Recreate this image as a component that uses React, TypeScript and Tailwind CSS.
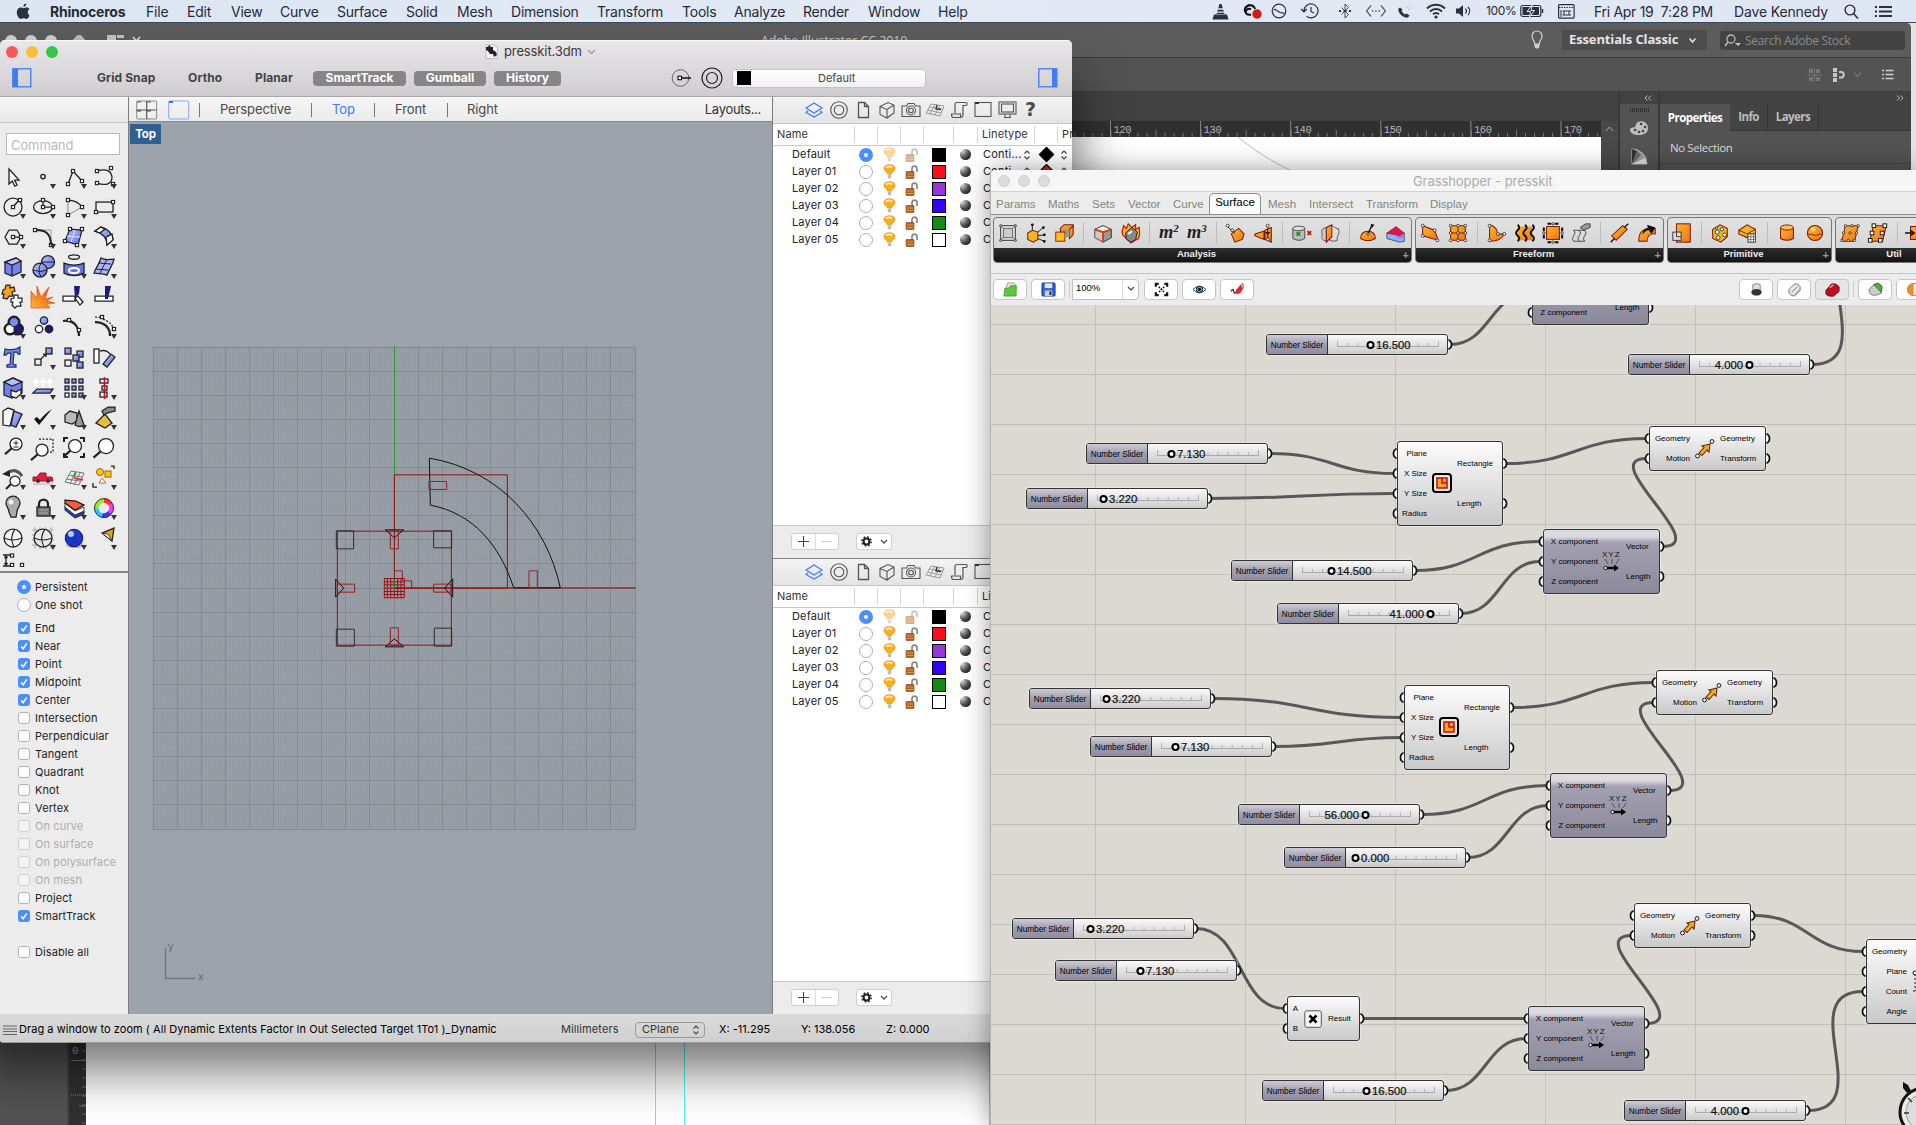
import React from "react";

/* ---------- helpers ---------- */
function Svg({ w, h = w, vb, children, cls = "" }: { w: number; h?: number; vb?: string; children: React.ReactNode; cls?: string }) {
  return (
    <svg width={w} height={h} viewBox={vb ?? `0 0 ${w} ${h}`} fill="none" className={`shrink-0 ${cls}`}>
      {children}
    </svg>
  );
}

/* gradients shared by the tool icons */
function SharedDefs() {
  return (
    <svg width="0" height="0" className="absolute">
      <defs>
        <linearGradient id="tool-orange" x1="0" y1="0" x2="1" y2="1"><stop offset="0" stopColor="#fdb827" /><stop offset="1" stopColor="#f2711a" /></linearGradient>
        <linearGradient id="tool-blue" x1="0" y1="0" x2="1" y2="1"><stop offset="0" stopColor="#b9c5ff" /><stop offset="1" stopColor="#5f70ea" /></linearGradient>
        <linearGradient id="tool-fire" x1="0" y1="1" x2="1" y2="0"><stop offset="0" stopColor="#ffb432" /><stop offset="1" stopColor="#e8420c" /></linearGradient>
      </defs>
    </svg>
  );
}

/* ---------- macOS menu bar ---------- */
const MENUS: [string, string][] = [
  ["File", "w-[41px]"], ["Edit", "w-[44px]"], ["View", "w-[49px]"], ["Curve", "w-[57px]"], ["Surface", "w-[69px]"],
  ["Solid", "w-[51px]"], ["Mesh", "w-[54px]"], ["Dimension", "w-[86px]"], ["Transform", "w-[85px]"], ["Tools", "w-[52px]"],
  ["Analyze", "w-[69px]"], ["Render", "w-[65px]"], ["Window", "w-[70px]"], ["Help", "w-[60px]"],
];

function MenuBar() {
  const c = "#2b313c";
  return (
    <div className="absolute top-0 left-0 flex h-[23px] w-[1916px] items-center border-b border-[#3c4858] bg-linear-to-r from-[#dbe6f2] via-[#e3eaf6] to-[#dfe6f3] text-[14px] font-normal tracking-[-0.22px] whitespace-pre text-[#252b35]">
      <div className="flex w-[50px] pl-[16px]">
        <Svg w={15} h={17}>
          <path d="M10.3 0.6c.2 1.7-1.3 3.300-2.900 3.200-.2-1.600 1.300-3.100 2.900-3.200zM13.500 12.400c-.7 1.600-1.700 3.500-3.200 3.500-1 0-1.500-.6-2.700-.6s-1.700.6-2.600.6C2.800 15.900.8 12.300.8 9.200c0-2.900 1.900-4.700 3.900-4.700 1.200 0 2 .7 3 .7s1.800-.8 3.200-.7c1.100 0 2 .6 2.600 1.500-2.600 1.600-2 5.100 0 6.400z" fill={c} />
        </Svg>
      </div>
      <div className="w-[96px] text-[14px] font-bold tracking-[-0.2px]">Rhinoceros</div>
      {MENUS.map(([m, w]) => <div key={m} className={w}>{m}</div>)}
      <div className="ml-[214px] flex w-[274px] items-center">
        <Svg w={17} h={17}><path d="M7.500 1h2l3 10H4.500zM2 11.500h13l1.500 5H.5z" fill={c} /><path d="M6 6h5M5 9.200h7" stroke="#dfe7f3" strokeWidth="1.300" /></Svg>
        <Svg w={22} h={16} cls="ml-[12px]"><path d="M10 11.500A4.800 4.800 0 1 1 12.500 4M5 9a3 3 0 0 1 5-2.500M4.500 5.500C6 1 13 1 14 6" stroke="#111" strokeWidth="1.900" /><circle cx="16" cy="11" r="4.700" fill="#d31d0c" /></Svg>
        <Svg w={16} h={16} cls="ml-[8px]"><circle cx="8" cy="8" r="6.800" stroke={c} strokeWidth="1.200" /><path d="M2.500 6.500c3.500-1.200 4 4.500 11 3.500" stroke={c} strokeWidth="1.200" /></Svg>
        <Svg w={20} h={17} cls="ml-[13px]"><path d="M4 8a7 7 0 1 1 2.500 5.200M1 6l3 3 2.800-3M11 4v4.500l3 1.500" stroke={c} strokeWidth="1.200" /></Svg>
        <Svg w={14} h={16} cls="ml-[18px]"><path d="M3.500 4.500l7 7L7 15V1l3.500 3.500-7 7" stroke="#444b57" strokeWidth="1" /><path d="M1 8h2M5.500 8h3M11 8h2" stroke={c} strokeWidth="2" /></Svg>
        <Svg w={22} h={14} cls="ml-[13px]"><path d="M6 1.500L1.500 7 6 12.500M16 1.500L20.500 7 16 12.500" stroke="#596070" strokeWidth="1.200" /><path d="M7 7h1.500M10.200 7h1.500M13.400 7h1.500" stroke="#596070" strokeWidth="1.500" /></Svg>
        <Svg w={16} h={16} cls="ml-[10px]"><path d="M3 4.500l-1.500 1c-1 4.500 5 10 9.500 9l1.500-2-3-2-2 1-3-3.500 1-1.500z" fill={c} /><path d="M9 5l4-4M11 7l4-4" stroke="#a5adba" strokeDasharray="1 1" /></Svg>
        <Svg w={20} h={16} cls="ml-[13px]"><path d="M1 5.500c5-5 13-5 18 0M4 8.500c3.500-3.400 8.500-3.400 12 0M7 11.300c2-1.700 4-1.700 6 0" stroke={c} strokeWidth="1.900" /><circle cx="10" cy="14" r="1.600" fill={c} /></Svg>
        <Svg w={18} h={14} cls="ml-[10px]"><path d="M0 4.500h3l4-3.500v12L3 9.500H0z" fill={c} /><path d="M9.500 4.500c1.200 1.500 1.200 3.500 0 5M12 2.800c2.200 2.500 2.200 6 0 8.400" stroke={c} strokeWidth="1.200" /></Svg>
      </div>
      <div className="w-[34px] text-[12px] tracking-[-0.35px]">100%</div>
      <div className="w-[38px]"><Svg w={24} h={14}><rect x=".8" y="1.500" width="20" height="11" rx="2" stroke={c} strokeWidth="1.200" /><rect x="2.500" y="3" width="16.500" height="8" fill={c} /><path d="M12 1L7 7.500h3.500L9.500 13l5-6.500H11z" fill={c} stroke="#e3eaf6" strokeWidth="1" /><path d="M22.500 5v4" stroke={c} strokeWidth="1.500" /></Svg></div>
      <div className="w-[36px]"><Svg w={17} h={15}><rect x=".6" y=".6" width="15.500" height="13.500" rx="1" stroke={c} strokeWidth="1.200" /><path d="M1 3.500h15" stroke={c} strokeWidth="1" strokeDasharray="1.500 1" /><path d="M6 7h5v4H6zM4.500 7h1.500M11 7h2M4.500 11H6M11 11h2M3 6v7" stroke={c} strokeWidth="1" /></Svg></div>
      <div className="w-[140px] tracking-[-0.3px]">Fri Apr 19  7:28 PM</div>
      <div className="w-[110px] tracking-[-0.15px]">Dave Kennedy</div>
      <Svg w={15} h={15}><circle cx="6" cy="6" r="4.900" stroke={c} strokeWidth="1.400" /><path d="M9.500 9.500l4.500 5" stroke={c} strokeWidth="1.600" /></Svg>
      <Svg w={19} h={13} cls="ml-[15px]"><path d="M5 2h13M5 6.500h13M5 11h13" stroke={c} strokeWidth="1.900" /><path d="M1 2h2M1 6.500h2M1 11h2" stroke={c} strokeWidth="1.900" /></Svg>
    </div>
  );
}

/* ---------- Illustrator, behind the other windows ---------- */
function Ruler() {
  const labels = [120, 130, 140, 150, 160, 170];
  return (
    <svg width="1601" height="16" className="shrink-0 bg-[#303030]">
      {Array.from({ length: 60 }, (_, i) => {
        const x = 1075 + i * 9.01;
        return x < 1598 ? <path key={i} d={`M${x} ${(i + 1) % 5 === 0 ? 9 : 12}V16`} stroke="#777" /> : null;
      })}
      {labels.map((l, i) => (
        <g key={l}>
          <path d={`M${1110.5 + i * 90.1} 0V16`} stroke="#888" />
          <text x={1113.5 + i * 90.1} y="11.500" fontSize="10.500" fill="#b4b4b4" fontFamily="Liberation Mono" letterSpacing="-0.4">{l}</text>
        </g>
      ))}
    </svg>
  );
}

function Illustrator() {
  return (
    <div className="absolute top-[23px] left-0 flex h-[1102px] w-[1911px] flex-col overflow-hidden rounded-tr-[5px] bg-[#535353] font-['Open_Sans','Noto_Sans',sans-serif] whitespace-nowrap">
      <div className="relative flex h-[35px] shrink-0 items-center border-b border-[#3c3c3c] bg-[#5c5c5c]">
        <div className="absolute top-[9px] left-[761px] text-[12.500px] tracking-[-0.1px] text-[#c4c4c4]">Adobe Illustrator CC 2019</div>
        <div className="flex w-[1529px] items-center self-start pt-[12px]">
          <Svg w={150} h={12}><circle cx="11" cy="6" r="6" fill="#cfcfcf" /><circle cx="31" cy="6" r="6" fill="#cfcfcf" /><circle cx="51" cy="6" r="6" fill="#cfcfcf" /><path d="M70 8l9-10 9 10z" fill="#b9b9b9" /><path d="M107-2h9v12h-9zM117-2h7v5h-7z" fill="#c4c4c4" /><path d="M133 2l3.500 4 3.500-4" stroke="#ddd" strokeWidth="1.500" /></Svg>
        </div>
        <Svg w={16} h={20}><path d="M5.500 12C4 10 3 9 3 6a5 5 0 0 1 10 0c0 3-1 4-2.500 6v2h-5z" stroke="#d0d0d0" strokeWidth="1.200" /><path d="M5.500 14h5v3l-1.500 1.500H7L5.500 17z" fill="#d0d0d0" /></Svg>
        <div className="ml-[17px] flex h-[20px] w-[145px] items-center rounded-[1px] bg-[#4d4d4d] pl-[7px] text-[13px] font-bold tracking-[-0.12px] text-[#e4e4e4]">
          <span className="w-[119px]">Essentials Classic</span>
          <Svg w={9} h={7}><path d="M1.500 1.500l3 3.500 3-3.500" stroke="#ddd" strokeWidth="1.600" /></Svg>
        </div>
        <div className="ml-[13px] flex h-[19px] w-[185px] items-center rounded-[3px] bg-[#434343] pt-px pl-[4px] text-[12px] tracking-[-0.3px] text-[#8b8b8b]">
          <Svg w={18} h={14} cls="mr-[3px]"><circle cx="7" cy="5" r="4" stroke="#bbb" strokeWidth="1.300" /><path d="M4 8L1 12" stroke="#bbb" strokeWidth="1.500" /><path d="M11 9h6l-3 3z" fill="#ccc" /></Svg>
          Search Adobe Stock
        </div>
      </div>
      <div className="flex h-[34px] shrink-0 items-center border-b border-[#3a3a3a] bg-[#535353] pl-[1807px]">
        <Svg w={15} h={14}><path d="M2 1h4v4H2zM9 1h4v4H9zM2 9h4v4H2zM9 9h4v4H9z" fill="#777" /><path d="M7.500 0v14M0 7h15" stroke="#777" /></Svg>
        <Svg w={16} h={14} cls="ml-[10px]"><path d="M1 0h4v4H1zM1 5h4v4H1zM1 10h4v4H1z" fill="#c8c8c8" /><path d="M7 4h3a3 3 0 0 1 0 5.500H7" stroke="#c8c8c8" strokeWidth="2" /></Svg>
        <Svg w={9} h={7} cls="ml-[5px]"><path d="M1 1.500l3.500 4 3.500-4" stroke="#777" strokeWidth="1.200" /></Svg>
        <Svg w={12} h={11} cls="ml-[20px]"><path d="M3.500 1.500h8M3.500 5.500h8M3.500 9.500h8M0 1.500h2M0 5.500h2M0 9.500h2" stroke="#d0d0d0" strokeWidth="1.500" /></Svg>
      </div>
      <div className="flex min-h-0 flex-1">
        <div className="flex w-[1618px] flex-col">
          <div className="h-[29px] shrink-0 bg-[#424242]" />
          <div className="flex h-[16px] shrink-0"><Ruler /><div className="flex flex-1 justify-center bg-[#494949] pt-[5px]"><Svg w={9} h={6}><path d="M1 5l3.500-4L8 5" stroke="#aaa" /></Svg></div></div>
          <div className="flex min-h-0 flex-1">
            <div className="w-[67px] shrink-0 bg-[#535353]" />
            <div className="flex w-[19px] shrink-0 items-end border-l-2 border-[#444] bg-[#303030]">
              <svg width="17" height="90">
                {Array.from({ length: 10 }, (_, i) => <path key={i} d={`M13 ${16 + i * 9}h4`} stroke="#666" />)}
                <path d="M2 25.500h15" stroke="#777" /><path d="M2 60h15" stroke="#888" strokeDasharray="1 1" />
                <text x="3" y="19" fontSize="10.500" fill="#aaa" fontFamily="Liberation Mono">0</text>
                <path d="M10 71h7" stroke="#777" />
              </svg>
            </div>
            <svg width="1515" height="988" className="shrink-0 bg-white">
              <path d="M569.500 0v988M598.500 0v988M903.500 0v988" stroke="#4ff3f3" />
              <path d="M1152 0c16 13 34 25 54 34" stroke="#bbb" fill="none" />
            </svg>
            <div className="flex-1 bg-[#494949]" />
          </div>
        </div>
        <div className="flex w-[42px] flex-col border-x-2 border-[#383838] bg-[#535353]">
          <div className="flex h-[12px] items-center justify-end bg-[#424242] pr-[6px]"><Svg w={8} h={6}><path d="M3.500.5L1 3l2.500 2.500M7 .5L4.500 3 7 5.500" stroke="#bbb" /></Svg></div>
          <div className="mt-[4px] flex justify-center"><Svg w={19} h={4}><path d="M0 2h19" stroke="#2f2f2f" strokeWidth="4" strokeDasharray="1 1" /></Svg></div>
          <Svg w={20} h={16} cls="mt-[8px] ml-[9px]"><path d="M19 8c0 5-4 7-9 7s-9-2-9-5 4-2 5-3 0-3 3-5c4-2 10 0 10 6z" fill="#bdbdbd" /><path d="M6 10h.1M10 12h.1M14 11h.1M16 7h.1M12 4h.1" stroke="#444" strokeWidth="2.600" strokeLinecap="round" /></Svg>
          <Svg w={18} h={17} cls="mt-[12px] ml-[11px]"><path d="M1 1v15h15A15 15 0 0 0 1 1z" fill="#999" stroke="#bbb" /><path d="M1 16L1 1l5 2z" fill="#333" /><path d="M1 16L6 3l4 4z" fill="#666" /><path d="M1 16l13-6 2 6z" fill="#ddd" /></Svg>
        </div>
        <div className="flex flex-1 flex-col bg-[#535353]">
          <div className="flex h-[12px] shrink-0 items-center justify-end bg-[#424242] pr-[7px]"><Svg w={8} h={6}><path d="M1 .5L3.500 3 1 5.500M4.500.5L7 3 4.500 5.500" stroke="#bbb" /></Svg></div>
          <div className="flex h-[27px] shrink-0 bg-[#434343] text-[11.500px] font-bold tracking-[-0.55px] text-[#bdbdbd]">
            <div className="flex w-[70px] items-center justify-center bg-[#535353] text-white">Properties</div>
            <div className="flex w-[38px] items-center justify-center border-r border-b border-[#333]">Info</div>
            <div className="flex w-[51px] items-center justify-center border-r border-b border-[#333]">Layers</div>
            <div className="flex-1 border-b border-[#333]" />
          </div>
          <div className="flex h-[33px] items-center border-b border-[#444] pt-px pl-[10px] text-[11.500px] tracking-[-0.4px] text-[#dcdcdc]">No Selection</div>
        </div>
      </div>
    </div>
  );
}

/* ---------- Rhino tool palette ---------- */
const K = "#222";
const B = "url(#tool-blue)";
const N = (x: number, y: number) => <rect key={`${x}-${y}`} x={x - 1.6} y={y - 1.6} width="3.200" height="3.200" fill="#eee" stroke={K} strokeWidth="1.100" />;
const s = { stroke: K, strokeWidth: 1.3 };
const lens = (x = 16, y = 12, r = 7) => <><path d={`M${x - r * 0.7} ${y + r * 0.7}L${x - r - 5} ${y + r + 4}`} stroke={K} strokeWidth="2.200" /><circle cx={x} cy={y} r={r} fill="#fff" {...s} /></>;

/* every tool is drawn on a 30 x 30 cell; the flag adds the fly-out triangle */
const TOOLS: [React.ReactNode, boolean][] = [
  [<path d="M11 7v15l3.300-3 2.500 5 2.300-1-2.500-5h4.400z" fill="#fff" {...s} />, false],
  [<circle cx="15" cy="14.500" r="2.200" {...s} />, true],
  [<><path d="M9 22l5-13 9 10" {...s} />{N(9, 22)}{N(14, 9)}{N(23, 19)}</>, true],
  [<><path d="M8 9c10-3 14 0 15 6 0 7-6 9-15 6" {...s} />{N(8, 9)}{N(8, 21)}{N(22, 6)}{N(24, 22)}</>, true],
  [<><circle cx="15" cy="15" r="9" {...s} /><path d="M15 15l6-7" {...s} />{N(15, 15)}{N(22, 8)}</>, true],
  [<><ellipse cx="15" cy="15" rx="9.500" ry="6.500" {...s} /><path d="M15 15h9M15 8v7" {...s} />{N(15, 15)}{N(15, 8)}{N(25, 15)}</>, true],
  [<><path d="M9 8v15l14-8" stroke="#888" /><path d="M9 8q9 0 14 7" {...s} />{N(9, 8)}{N(9, 23)}{N(23, 15)}</>, true],
  [<><rect x="7" y="10" width="17" height="10" {...s} />{N(7, 20)}{N(24, 10)}</>, true],
  [<><path d="M11 8h8l4 7-4 7h-8l-4-7z" {...s} /><path d="M15 15h8" {...s} />{N(15, 15)}{N(23, 15)}</>, true],
  [<><path d="M8 8h15v15" stroke="#999" /><path d="M8 8c9 0 15 3 15 15" stroke={K} strokeWidth="2" />{N(7, 8)}{N(23, 23)}</>, true],
  [<><path d="M11 7l12 1-4 15-13-4z" fill={B} {...s} /><path d="M16 8l-4 12M8 14l13 1" stroke="#dfe4ff" />{N(11, 7)}{N(23, 7)}{N(6, 19)}{N(18, 23)}</>, true],
  [<><path d="M6 9l6-4c6 1 11 6 12 12l-6 6C18 15 13 11 6 9z" fill={B} {...s} /><path d="M6 9l6-4 4 2-5 4z" fill="#fff" {...s} /><path d="M17 15l6-3 1 6-6 5z" fill="#fff" {...s} /></>, true],
  [<><path d="M7 10l11-4 5 3v11l-9 4-7-3z" fill="#7583f0" {...s} /><path d="M7 10l7 3 9-4-5-3z" fill="#b9c3ff" {...s} /><path d="M14 13v11" {...s} /></>, true],
  [<><circle cx="20" cy="10" r="6.500" fill={B} {...s} /><path d="M14 10h12" {...s} strokeWidth="1" /><circle cx="12" cy="18" r="7" fill={B} {...s} /><path d="M5 18q7 3 14 0M13 11q-4 7 0 14" {...s} strokeWidth="1" /></>, true],
  [<><ellipse cx="15" cy="5" rx="5.500" ry="2.200" {...s} /><path d="M5 11q10 4 20 0v10q-10 5-20 0z" fill="#6575ea" {...s} /><ellipse cx="15" cy="18.500" rx="5" ry="2.500" stroke="#fff" strokeWidth="2" /></>, true],
  [<><path d="M12 6c5 3 8 1 13 1-1 6-5 10-7 16-5-2-8-1-13-2 1-4 5-8 7-15z" fill="#a9b5fb" {...s} /><path d="M10 11l12 1M7 17l12 1M18 7l-7 14" {...s} strokeWidth="1" /></>, true],
  [<><path d="M5 8l2-1 1-4h4l0 3 4-1 1 4-3 1 1 4-4 0-2 3-4-1 1-4-2 0z" fill="#f5a01e" {...s} strokeWidth="1.200" /><path d="M13 17l3-1 0-3h4l0 3 4 0v4l-2 0 1 4-4 0-2 2-3-3 1-3-2 0z" fill="#fff" {...s} strokeWidth="1.200" /></>, false],
  [<path d="M3 26V9l6 7V4l4 11 8-10-4 12 8-2-6 4 8 2-8 1 3 4z" fill="url(#tool-fire)" stroke="#d8480c" strokeWidth=".6" />, false],
  [<><path d="M4 14h12v5H4zM16 16l3-2 5 6-3 3z" fill="#fff" {...s} /><path d="M15 4h6l-1 8-4 4z" fill="#1c1c7a" /></>, false],
  [<><path d="M6 14h18v5H6z" fill="#fff" {...s} /><path d="M16 4h6l-3 13h-3z" fill="#1c1c7a" /></>, false],
  [<><circle cx="16" cy="10" r="4" stroke={K} strokeWidth="5" /><circle cx="12" cy="17" r="4" stroke={K} strokeWidth="5" /><circle cx="19.500" cy="17" r="4" stroke={K} strokeWidth="5" /><circle cx="12" cy="17" r="4" fill="#fff" /><circle cx="19.500" cy="17" r="4" fill="#1c1c7a" /><circle cx="16" cy="10" r="4.500" fill="#7a8cf0" stroke={K} /></>, true],
  [<><circle cx="16" cy="8.500" r="3.700" fill={B} {...s} /><circle cx="11" cy="17" r="3.700" fill="#fff" {...s} /><circle cx="21" cy="17" r="3.700" fill="#1c1c7a" {...s} /></>, false],
  [<><path d="M4 9c9-2 16 4 16 15" stroke={K} strokeWidth="2.200" />{N(10, 8)}{N(20, 18)}</>, false],
  [<><path d="M6 10c9 0 15 5 15 14" stroke={K} strokeWidth="2.200" /><path d="M6 5h6M14 7c7 3 10 6 10 10" {...s} strokeDasharray="2 1.500" />{N(13, 5)}{N(25, 17)}</>, true],
  [<path d="M7 6c5 1 11 1 15-2l0 7-2 0-1-2-3 0-1 12 3 1v2l-9 0v-2l3-1 1-11-3 0-2 2-2 0z" fill="#6f86ee" stroke="#1f2f70" strokeWidth="1.200" />, false],
  [<><rect x="7" y="16" width="6" height="6" fill="#eee" {...s} /><rect x="18" y="5" width="6" height="6" fill={B} {...s} /><path d="M13 16l5-5M15 11h3v3" {...s} /></>, true],
  [<><rect x="6" y="5" width="6" height="6" fill={B} {...s} /><rect x="18" y="8" width="6" height="6" fill={B} {...s} /><rect x="14" y="12" width="6" height="6" fill={B} {...s} /><rect x="6" y="17" width="6" height="6" fill="#eee" {...s} /><rect x="18" y="19" width="6" height="6" fill={B} {...s} /></>, false],
  [<><rect x="5" y="6" width="5" height="14" fill="#fff" {...s} /><path d="M14 21l8-10 4 3-8 10z" fill={B} {...s} /><path d="M11 8q6-2 10 3" {...s} /></>, false],
  [<><path d="M6 9l9-4 9 4v11l-10 5-8-3z" fill="#6f80ee" {...s} /><path d="M6 9l8 4 10-4-9-4z" fill="#b5c0ff" {...s} /><path d="M13 17l5 2 5-3v5l-5 4-5-2z" fill="#fff" {...s} /></>, true],
  [<><path d="M5 20l4-4h16l-3 4z" fill={B} {...s} /><path d="M8 15V7M15 15V7M22 15V7M6 9l2-3 2 3zM13 9l2-3 2 3zM20 9l2-3 2 3z" stroke="#fff" strokeWidth="1.800" /></>, true],
  [<>{[6, 13, 20].map((x) => [6, 13, 20].map((y) => <rect key={`${x}${y}`} x={x} y={y} width="4" height="4" fill={x === 6 && y === 20 ? "#fff" : B} {...s} />))}</>, true],
  [<><rect x="11" y="6" width="8" height="4" {...s} /><rect x="13" y="13" width="5" height="4" {...s} /><rect x="11" y="19" width="7" height="5" {...s} /><path d="M15.500 4v22" stroke="#d01020" strokeWidth="1.600" /></>, true],
  [<><path d="M5 8l5-3 6 2-4 16-7-1z" fill="#f5f5f5" {...s} /><path d="M16 8l8 3-6 13-5-2z" fill={B} {...s} /></>, true],
  [<path d="M6 16l5 6L24 6c-5 3-9 7-12 11l-3-3z" fill="#111" />, true],
  [<><path d="M6 12l5-4 7 2v8l-5 3-7-2z" fill="#bbb" {...s} /><path d="M20 8l5 14q-4 3-9 0z" fill="#999" {...s} /></>, true],
  [<><path d="M7 20l9-9 7 9-7 5z" fill="#e5bd3e" {...s} /><path d="M13 8l6-4h7v4l-8 2-3 2z" fill="#888" {...s} /></>, true],
  [<>{lens(18, 11, 6)}<path d="M15.500 10h5M18 7.500v5M15.500 14h5" {...s} strokeWidth="1" /></>, false],
  [<><path d="M11 6h14v13H18" {...s} strokeDasharray="2 1.500" />{lens(14, 17, 6)}</>, false],
  [<>{lens(16, 13, 6.5)}<path d="M5 9V5h4M21 5h4v4M25 20v4h-4M5 20v4h4" stroke={K} strokeWidth="2" /></>, false],
  [lens(17, 13, 7.5), false],
  [<><path d="M13 21l-5 5" {...s} strokeWidth="2" /><circle cx="17" cy="18" r="5" fill="#fff" {...s} /><path d="M9 10q9-6 15 3" stroke="#555" strokeWidth="3" /><path d="M4 11l8-4v7z" fill="#222" /></>, true],
  [<><path d="M5 14h4l3-4h6v4h6l1 4H5z" fill="#e0213b" stroke="#a01020" /><circle cx="10" cy="18" r="2" fill="#333" /><circle cx="20" cy="18" r="2" fill="#333" /><path d="M5 21h20" stroke="#e79aa5" /></>, true],
  [<><path d="M12 8l13 2-5 12-14-3zM10 12l13 2M8 16l13 2M16 9l-5 12M21 10l-6 12" stroke="#777" strokeWidth="1" /><path d="M15 15l9 2" stroke="#e02020" strokeWidth="1.500" /><path d="M15 15l2-6" stroke="#20b040" strokeWidth="1.500" /></>, true],
  [<><circle cx="11" cy="9" r="3.500" fill="#ffc800" stroke="#a06010" /><rect x="16" y="8" width="6" height="6" fill="#ffc800" stroke="#a06010" /><path d="M10 20l3-5 4 5z" fill="#fff" stroke="#c07030" /><path d="M22 3h3v3M4 20v4h4" {...s} /></>, true],
  [<><path d="M11 19c0-4-3-5-3-9a7 7 0 0 1 14 0c0 4-3 5-3 9l-1 5h-5z" fill="#aaa" {...s} /><circle cx="13" cy="9" r="2.500" fill="#eee" /></>, true],
  [<><path d="M11 15v-4a4.500 4.500 0 0 1 9 0v4" stroke={K} strokeWidth="2.200" /><rect x="9" y="14" width="13" height="9" fill="#777" {...s} /><path d="M11 17h9M11 20h9" stroke="#aaa" /></>, true],
  [<><path d="M6 13l10 9 9-4v3l-9 4-10-8z" fill="#2040d0" {...s} strokeWidth="1" /><path d="M6 10l10 8 9-4v4l-9 4-10-8z" fill="#fff" {...s} strokeWidth=".8" /><path d="M6 7l11 1 8 4-9 5-10-7z" fill="#ff5a3c" {...s} /></>, true],
  [<><path d="M15 7.500a7.500 7.500 0 0 1 6.500 4" stroke="#f33" strokeWidth="4.500" /><path d="M21.500 11.300a7.500 7.500 0 0 1-1 8.500" stroke="#f3f" strokeWidth="4.500" /><path d="M20.500 19.700a7.500 7.500 0 0 1-7.500 2.500" stroke="#33f" strokeWidth="4.500" /><path d="M13 22.200a7.500 7.500 0 0 1-5.500-7" stroke="#2cf" strokeWidth="4.500" /><path d="M7.500 15.300a7.500 7.500 0 0 1 7.500-7.800" stroke="#9e2" strokeWidth="4.500" /><circle cx="15" cy="15" r="9.500" stroke="#333" /></>, true],
  [<><circle cx="15" cy="15" r="9" fill="#f2f2f2" {...s} /><path d="M17 6q-6 8-1 18M6 15q9 4 18 0" {...s} strokeWidth="1.100" /></>, false],
  [<><path d="M4 7h22M4 12h22M4 17h22M4 22h22M7 4v22M12 4v22M18 4v22M23 4v22" stroke="#aaa" /><circle cx="15" cy="15" r="9" fill="#e8e8e8" {...s} /><path d="M17 6q-6 8-1 18M6 15q9 4 18 0" {...s} strokeWidth="1.100" /></>, true],
  [<><ellipse cx="16" cy="22" rx="9" ry="3" fill="#bbb" /><circle cx="15" cy="15" r="8.800" fill="#1a35c8" stroke="#101a60" /><circle cx="12" cy="11" r="3" fill="#b8c8ff" /></>, true],
  [<><path d="M13 10l12-5-2 13z" fill="#f0a020" {...s} /><path d="M13 10l10 8-4-7z" fill="#fff" {...s} strokeWidth=".8" /></>, true],
];

function ToolPalette() {
  return (
    <div className="flex h-[415px] shrink-0 flex-col overflow-hidden pt-[6px]">
      <div className="-ml-[2px] grid w-[121px] shrink-0 grid-cols-4">
        {TOOLS.map(([art, fly], i) => (
          <svg key={i} viewBox="0 0 30 30" fill="none" className="h-[30.100px] w-[30px]">
            {art}
            {fly && <path d="M22 22h6l-3 5z" fill="#333" />}
          </svg>
        ))}
      </div>
      <Svg w={26} h={14} cls="shrink-0"><path d="M3 2h7M3 13h7M6 3v9M4.500 5L6 3l1.500 2M4.500 10L6 12l1.500-2" {...s} />{N(12, 2.5)}{N(12, 12)}{N(22, 12)}</Svg>
    </div>
  );
}

/* ---------- Rhino object snaps ---------- */
function Radio({ on }: { on?: boolean }) {
  return (
    <span className={`flex size-[14px] shrink-0 items-center justify-center rounded-full ${on ? "bg-[#4a90fb]" : "border border-[#b0b0b0] bg-white"}`}>
      {on && <span className="size-[4px] rounded-full bg-white" />}
    </span>
  );
}
const SNAPS: [string, number][] = [
  ["End", 1], ["Near", 1], ["Point", 1], ["Midpoint", 1], ["Center", 1], ["Intersection", 0], ["Perpendicular", 0], ["Tangent", 0],
  ["Quadrant", 0], ["Knot", 0], ["Vertex", 0], ["On curve", 2], ["On surface", 2], ["On polysurface", 2], ["On mesh", 2], ["Project", 0], ["SmartTrack", 1],
];
function Check({ label, state }: { label: string; state: number }) {
  return (
    <div className={`flex h-[18px] items-center gap-[5px] pl-[18px] ${state === 2 ? "text-[#acacac]" : ""}`}>
      <span className={`flex size-[12px] shrink-0 items-center justify-center rounded-[3px] ${state === 1 ? "bg-[#4a90fb]" : state === 2 ? "border border-[#cfcfcf] bg-[#f4f4f4]" : "border border-[#b2b2b2] bg-white"}`}>
        {state === 1 && <Svg w={8} h={8}><path d="M1.200 4.500L3.200 6.700 6.800 1.300" stroke="#fff" strokeWidth="1.500" /></Svg>}
      </span>
      {label}
    </div>
  );
}
function Snaps() {
  return (
    <div className="flex flex-1 flex-col border-t-2 border-[#858585] pt-[5px] text-[11px] tracking-[0.1px] text-[#222]">
      <div className="flex h-[18px] items-center gap-[4px] pl-[17px]"><Radio on />Persistent</div>
      <div className="mb-[5px] flex h-[18px] items-center gap-[4px] pl-[17px]"><Radio />One shot</div>
      {SNAPS.map(([l, st]) => <Check key={l} label={l} state={st} />)}
      <div className="h-[18px]" />
      <Check label="Disable all" state={0} />
    </div>
  );
}

/* ---------- Rhino viewport ---------- */
function Viewport() {
  const lines = Array.from({ length: 21 }, (_, i) => i * 24.1);
  return (
    <div className="relative flex-1 bg-[#9ca3aa]">
      <svg width="643" height="892" viewBox="129 122 643 892" fill="none" className="block">
        <defs>
          <pattern id="fine" width="2.410" height="2.410" patternUnits="userSpaceOnUse" x="152.500" y="346.500"><path d="M0 0H2.410M0 0V2.410" stroke="#8a9098" strokeWidth=".5" /></pattern>
        </defs>
        <rect x="152.500" y="346.500" width="482.500" height="482" fill="#989fa6" />
        <rect x="152.500" y="346.500" width="482.500" height="482" fill="url(#fine)" />
        {lines.map((v) => (
          <path key={v} d={`M${Math.round(152.5 + v) + 0.5} 346.500v482.500M152.500 ${Math.round(346.5 + v) + 0.5}h482.500`} stroke="#838990" />
        ))}
        <path d="M394.500 346v241" stroke="#2f9a38" />
        <path d="M394.500 588h241" stroke="#8e2a30" strokeWidth="1.300" />
        <g transform="translate(300 430.500) scale(0.33333)" strokeWidth="3">
          <path d="M283 133H622V473H283z" stroke="#980d12" />
          <path d="M388 83C600 118 740 282 781 472H641C600 345 520 248 391 224z" stroke="#111" />
          <path d="M112 302H454V644H112z" stroke="#980d12" />
          <path d="M109 301h52v54h-52zM401 301h54v51h-54zM109 596h54v51h-54zM403 593h52v54h-52z" stroke="#2c2e33" />
          <path d="M256 298h55l-28 24zM256 649h55l-28-24zM107 446v54l24-27zM458 445v55l-24-27z" stroke="#111" />
          <path d="M271 302h24v53h-24zM271 592h24v52h-24zM112 461h52v24h-52zM401 461h52v24h-52zM387 153h53v24h-53zM687 421h25v51h-25zM283 421h24v30M311 451h24v22" stroke="#a01a22" />
          <path d="M253 444h60v58h-60zM253 454h60M253 463h60M253 473h60M253 483h60M253 492h60M262 444v58M272 444v58M283 444v58M293 444v58M303 444v58" stroke="#a00d12" />
          <path d="M283 444v30" stroke="#1c8a1c" />
        </g>
        <path d="M165.500 948v30.500h30" stroke="#74797f" strokeWidth="1.400" />
        <text x="168" y="950" fontSize="10" fill="#666a70" fontFamily="Inter">y</text>
        <text x="198" y="979.500" fontSize="10" fill="#666a70" fontFamily="Inter">x</text>
      </svg>
      <div className="absolute top-[2px] left-px flex h-[20px] w-[31px] items-center justify-center bg-[#2f608f] pt-px text-[11.500px] font-bold tracking-[-0.2px] text-white">Top</div>
    </div>
  );
}

/* ---------- Rhino layer panels ---------- */
function PanelIcons() {
  const g = { stroke: "#555", strokeWidth: 1.1 };
  return (
    <div className="flex h-[27px] shrink-0 items-center border-b border-[#c6c6c6] bg-linear-to-b from-[#f3f3f3] to-[#e4e4e4] pb-px pl-[31px]">
      <Svg w={20} h={18}><path d="M10 2l8 5-8 5-8-5z" stroke="#3f7bf5" strokeWidth="1.200" /><path d="M4 10l-2 1.500L10 16l8-4.500L16 10" stroke="#3f7bf5" strokeWidth="1.200" /></Svg>
      <Svg w={20} h={18} cls="ml-[5px]"><circle cx="10" cy="9" r="8.300" {...g} /><circle cx="10" cy="9" r="4.800" {...g} /></Svg>
      <Svg w={14} h={18} cls="ml-[8px]"><path d="M1.500 1.500h6l4 4v11h-10zM7.500 1.500v4h4" {...g} strokeWidth="1.300" /></Svg>
      <Svg w={18} h={18} cls="ml-[7px]"><path d="M2 5.500L10 1.500l6 2.500v8l-7 5-7-3.500zM2 5.500L9 8.500 16 4M9 8.500V17" {...g} /></Svg>
      <Svg w={20} h={16} cls="ml-[5px]"><path d="M1 4h4.500L7 1.500h6L14.500 4H19v10.500H1z" {...g} /><circle cx="10" cy="8.500" r="4.500" {...g} /><circle cx="10" cy="8.500" r="2.300" {...g} /></Svg>
      <Svg w={20} h={14} cls="ml-[4px]"><path d="M6 1l13 2-4 10-14-3zM4 4l14 2M3 7l13 3M10 1.500L5 11M15 2l-5 10" stroke="#999" /><path d="M12 2l-1 4 5 .5" stroke="#333" strokeWidth="1.400" /></Svg>
      <Svg w={18} h={18} cls="ml-[5px]"><path d="M5 12V3.500C5 2 6 1.500 7 1.500h9c1.500 0 1.500 3 0 3h-3V14c0 3-2.500 2.500-2.500 1v-2H1.500c0 2 0 3.500 1.500 3.500h8" {...g} strokeWidth="1.200" /></Svg>
      <Svg w={18} h={18} cls="ml-[6px]"><rect x="1" y="1.500" width="16" height="14" {...g} /><path d="M1 2h4" stroke="#333" strokeWidth="2" /></Svg>
      <Svg w={19} h={18} cls="ml-[6px]"><rect x="1" y="1" width="17" height="12" {...g} /><rect x="3.500" y="3" width="12" height="8" {...g} /><path d="M6 16.500h7M7 13.500v3M12 13.500v3" {...g} /></Svg>
      <span className="ml-[8px] font-['DejaVu_Sans'] text-[19px] leading-none font-bold text-[#4a4a4a]">?</span>
    </div>
  );
}
const UpDown = () => <Svg w={8} h={10}><path d="M1.500 3.500L4 1l2.500 2.500M1.500 6.500L4 9l2.500-2.500" stroke="#444" strokeWidth="1.100" /></Svg>;
const LAYERS: [string, string][] = [
  ["Default", "bg-black"], ["Layer 01", "bg-[#fb0d1b]"], ["Layer 02", "bg-[#9437d8]"],
  ["Layer 03", "bg-[#3300ff]"], ["Layer 04", "bg-[#158a12]"], ["Layer 05", "bg-white"],
];
const Sep = ({ w, children }: { w: string; children?: React.ReactNode }) => (
  <div className={`${w} flex h-[17px] shrink-0 items-center overflow-hidden border-l border-[#d4d4d4]`}>{children}</div>
);
function LayerPanel() {
  return (
    <>
      <PanelIcons />
      <div className="flex h-[22px] shrink-0 items-center border-b border-[#c9c9c9] bg-white text-[11px] tracking-[0.1px] text-[#333]">
        <div className="w-[81px] shrink-0 pl-[4px]">Name</div>
        <Sep w="w-[23px]" /><Sep w="w-[23px]" /><Sep w="w-[23px]" /><Sep w="w-[30px]" /><Sep w="w-[24px]" />
        <Sep w="w-[57px]"><span className="pl-[4px]">Linetype</span></Sep><Sep w="w-[23px]" /><Sep w="w-[15px]"><span className="pl-[4px]">Pr</span></Sep>
      </div>
      <div className="flex min-h-0 flex-1 flex-col overflow-hidden bg-white text-[11px] leading-[15px] text-[#222]">
        {LAYERS.map(([n, c], i) => (
          <div key={n} className="flex h-[17px] shrink-0 items-center">
            <div className="w-[81px] shrink-0 pl-[19px] tracking-[0.15px]">{n}</div>
            <div className="flex w-[24px] justify-center"><Radio on={i === 0} /></div>
            <div className={`flex w-[23px] justify-center ${i === 0 ? "opacity-50" : ""}`}>
              <Svg w={13} h={15}><path d="M4.500 10C4 8 1 7 1 4.500 1 2 3 .7 6.500.7S12 2 12 4.500C12 7 9 8 8.500 10z" fill="#f9b01c" stroke="#e08e12" strokeWidth=".7" /><path d="M3 3.500c1-1.500 5-1.500 6 0" stroke="#fff3b8" strokeWidth="1.800" /><path d="M4.700 10.500h3.600v3L6.500 14.700l-1.800-1.200z" fill="#bbb" /></Svg>
            </div>
            <div className={`flex w-[23px] justify-center ${i === 0 ? "opacity-50" : ""}`}>
              <Svg w={14} h={14}><path d="M7 7V4a2.500 2.800 0 0 1 5 0v3" stroke="#888" strokeWidth="1.700" /><rect x="1" y="6.500" width="8" height="7" rx=".5" fill="#b5651d" stroke="#7a3e0c" strokeWidth=".6" /><path d="M1.500 9h7M1.500 11.500h7" stroke="#e0a060" strokeWidth=".8" /></Svg>
            </div>
            <div className="flex w-[30px] justify-center pl-px"><span className={`h-[14px] w-[14px] border border-black ${c}`} /></div>
            <div className="flex w-[24px] justify-center"><span className="size-[11px] rounded-full bg-radial-[at_20%_15%] from-[#ddd] via-[#555] via-[50%] to-[#000]" /></div>
            <div className="flex w-[57px] shrink-0 items-center pl-[6px]"><span className="w-[40px] tracking-[0.2px]">Conti...</span><UpDown /></div>
            <div className="flex w-[23px] shrink-0 justify-center pl-px"><span className={`size-[11px] rotate-45 border border-black ${c}`} /></div>
            <div className="flex w-[15px] shrink-0 pl-[3px]"><UpDown /></div>
          </div>
        ))}
      </div>
      <div className="flex h-[33px] shrink-0 items-center gap-[17px] border-t border-[#c4c4c4] bg-[#ececec] pb-px pl-[18px]">
        <div className="flex h-[17px] w-[48px] rounded-[3px] border border-[#cfcfcf] bg-white">
          <div className="flex flex-1 items-center justify-center border-r border-[#ddd]"><Svg w={11} h={11}><path d="M0 5.500h11M5.500 0v11" stroke="#444" strokeWidth="1.100" /></Svg></div>
          <div className="flex flex-1 items-center justify-center"><Svg w={11} h={11}><path d="M0 5.500h11" stroke="#ccc" /></Svg></div>
        </div>
        <div className="flex h-[17px] w-[36px] items-center justify-center gap-[8px] rounded-[3px] border border-[#cfcfcf] bg-white">
          <Svg w={11} h={11}><circle cx="5.500" cy="5.500" r="2.900" stroke="#222" strokeWidth="2" /><circle cx="5.500" cy="5.500" r="4.600" stroke="#222" strokeWidth="1.500" strokeDasharray="1.800 1.810" /></Svg>
          <Svg w={8} h={6}><path d="M1 1l3 3 3-3" stroke="#555" strokeWidth="1.400" /></Svg>
        </div>
      </div>
    </>
  );
}

/* ---------- Rhino window ---------- */
const Pill = ({ children, w }: { children: string; w: string }) => (
  <div className={`${w} flex h-[15px] items-center justify-center rounded-[4px] bg-[#858585] text-white`}>{children}</div>
);
function Rhino() {
  return (
    <div className="absolute top-[40px] left-0 flex h-[1003px] w-[1072px] flex-col overflow-hidden rounded-t-[5px] rounded-b-[4px] bg-[#ececec] font-['Inter',sans-serif] whitespace-nowrap">
      <div className="flex h-[57px] shrink-0 flex-col border-b border-[#a9a9a9] bg-linear-to-b from-[#e9e7e9] to-[#cfcdcf]">
        <div className="flex h-[22px] items-center border-t border-white/70 pl-[6px]">
          <span className="size-[12px] rounded-full bg-[#fc5753]" /><span className="ml-[8px] size-[12px] rounded-full bg-[#fdbc40]" /><span className="ml-[8px] size-[12px] rounded-full bg-[#34c84a]" />
          <Svg w={13} h={15} cls="ml-[427px]"><path d="M1 1h9l2.500 3v10.500H1z" fill="#f2f2f2" stroke="#aaa" strokeWidth=".7" /><path d="M1 3l2 0 1-2 2 2 2 0 0 3 3 2 1 3-3 2-1-3-3 0-2-3-2-1z" fill="#222" /></Svg>
          <span className="ml-[6px] text-[13px] tracking-[-0.12px] text-[#3a3a3a]">presskit.3dm</span>
          <Svg w={9} h={6} cls="ml-[5px]"><path d="M1 1l3.500 3.500L8 1" stroke="#999" strokeWidth="1.100" /></Svg>
        </div>
        <div className="flex h-[32px] items-center text-[12px] font-bold tracking-[0px] text-[#444]">
          <Svg w={20} h={20} cls="ml-[12px]"><rect x=".8" y=".8" width="18" height="18" stroke="#3f7bf5" strokeWidth="1.300" /><path d="M1 1h5v18H1z" fill="#3f7bf5" /></Svg>
          <span className="ml-[65px] w-[91px] tracking-[0.1px]">Grid Snap</span><span className="w-[67px] tracking-[0.15px]">Ortho</span><span className="w-[58px] tracking-[0.1px]">Planar</span>
          <div className="flex gap-[8px]"><Pill w="w-[93px]">SmartTrack</Pill><Pill w="w-[72px]">Gumball</Pill><Pill w="w-[67px]">History</Pill></div>
          <Svg w={20} h={18} cls="ml-[110px]"><circle cx="9.500" cy="9" r="8.300" stroke="#666" /><path d="M9 9h11" stroke="#111" strokeWidth="1.500" /><rect x="7" y="7.200" width="3.500" height="3.500" fill="#fff" stroke="#111" strokeWidth="1.100" /></Svg>
          <Svg w={22} h={22} cls="ml-[10px]"><circle cx="11" cy="11" r="10" stroke="#222" strokeWidth="1.200" /><circle cx="11" cy="11" r="5.500" stroke="#222" strokeWidth="1.200" /></Svg>
          <div className="ml-[9px] flex h-[19px] w-[194px] items-center rounded-[4px] border border-[#c4c4c4] bg-linear-to-b from-white to-[#f1f1f1] text-[11px] font-normal text-[#444]">
            <span className="ml-[4px] size-[14px] bg-black" /><span className="ml-[67px]">Default</span>
          </div>
          <Svg w={20} h={20} cls="ml-[112px]"><rect x=".8" y=".8" width="18" height="18" stroke="#3f7bf5" strokeWidth="1.300" /><path d="M14 1h5v18h-5z" fill="#3f7bf5" /></Svg>
        </div>
      </div>
      <div className="flex min-h-0 flex-1">
        <div className="flex w-[129px] shrink-0 flex-col border-r border-[#7d7d7d]">
          <div className="h-[26px] shrink-0 border-b border-[#c9c9c9] bg-linear-to-b from-[#f6f6f6] to-[#e9e9e9]" />
          <div className="mt-[10px] ml-[6px] flex h-[22px] w-[114px] shrink-0 items-center border border-[#b9b9b9] bg-white pt-[3px] pl-[4px] text-[13px] tracking-[-0.1px] text-[#bababa]">Command</div>
          <div className="h-px shrink-0" />
          <ToolPalette />
          <Snaps />
        </div>
        <div className="flex w-[643px] shrink-0 flex-col">
          <div className="flex h-[25px] shrink-0 items-center border-b border-[#8a8a8a] bg-linear-to-b from-[#f6f6f6] to-[#ebebeb] pt-px text-[13px] tracking-[-0.12px] text-[#4a4a4a]">
            <Svg w={22} h={20} cls="ml-[7px]"><rect x=".7" y="1" width="20" height="18" rx="1" stroke="#888" /><path d="M.7 10h20M10.700 1v18M1 2h4M11 2h4M1 11h4M11 11h4" stroke="#555" strokeWidth="1.200" /></Svg>
            <Svg w={22} h={20} cls="ml-[10px]"><rect x=".7" y="1" width="20" height="18" rx="1" stroke="#86a8f5" /><path d="M1 2h4" stroke="#3f6fe0" strokeWidth="2" /></Svg>
            <span className="ml-[9px] h-[14px] w-px bg-[#777]" /><span className="ml-[20px] w-[91px]">Perspective</span>
            <span className="h-[14px] w-px bg-[#777]" /><span className="ml-[20px] w-[42px] text-[#3f7bf5]">Top</span>
            <span className="h-[14px] w-px bg-[#777]" /><span className="ml-[20px] w-[52px]">Front</span>
            <span className="h-[14px] w-px bg-[#777]" /><span className="ml-[19px]">Right</span>
            <span className="mr-[11px] ml-auto tracking-[-0.3px] text-[#333]">Layouts...</span>
          </div>
          <Viewport />
        </div>
        <div className="flex w-[300px] shrink-0 flex-col border-l border-[#7d7d7d]">
          <div className="flex h-[461px] shrink-0 flex-col"><LayerPanel /></div>
          <div className="flex min-h-0 flex-1 flex-col border-t border-[#858585]"><LayerPanel /></div>
        </div>
      </div>
      <div className="flex h-[29px] shrink-0 items-center border-b border-[#999] bg-linear-to-b from-[#dadada] to-[#d0d0d0] pt-[3px] text-[11px] text-black">
        <Svg w={15} h={10} cls="ml-[3px]"><path d="M0 1h14M0 4h14M0 6.500h14M0 9.500h14" stroke="#666" strokeWidth="1" /></Svg>
        <span className="ml-px w-[542px] tracking-[0.05px]">Drag a window to zoom ( All Dynamic Extents Factor In Out Selected Target 1To1 )_Dynamic</span>
        <span className="w-[74px] tracking-[0.1px] text-[#333]">Millimeters</span>
        <span className="flex h-[16px] w-[70px] items-center justify-between rounded-[4px] border border-[#999] pr-[4px] pl-[6px] text-[#333]">CPlane <UpDown /></span>
        <span className="ml-[14px] w-[82px]">X: -11.295</span><span className="w-[85px]">Y: 138.056</span><span>Z: 0.000</span>
      </div>
    </div>
  );
}

/* ---------- Grasshopper ribbon ---------- */
const O = "url(#tool-orange)";
const D = "#7a1710";
const o = { fill: O, stroke: D, strokeWidth: 1.1 };
const W = (x: number, y: number, r = 1.6) => <circle key={`${x},${y}`} cx={x} cy={y} r={r} fill="#fff" stroke="#222" strokeWidth=".9" />;
const SEP = "sep";
type Tool = React.ReactNode;
const wave = (x: number) => <path d={`M${x} 3q3.500 3 0 6t0 6 0 6`} stroke="#111" strokeWidth="2.200" />;
const moment = (n: string) => (
  <text x="1" y="17" fontFamily="Liberation Serif" fontStyle="italic" fontWeight="bold" fontSize="20" fill="#222">m<tspan fontSize="12" dy="-6">{n}</tspan></text>
);
const ANALYSIS: Tool[] = [
  <><rect x="4" y="4" width="16" height="16" stroke="#333" /><rect x="7" y="7" width="10" height="10" stroke="#666" fill="#ccc" />{W(4, 4, 1.2)}{W(20, 4, 1.2)}{W(4, 20, 1.2)}{W(20, 20, 1.2)}<path d="M4 4l3 3M20 4l-3 3M4 20l3-3M20 20l-3-3" stroke="#666" /></>,
  <><path d="M3 12l5-3 6 2v8l-5 3-6-3z" {...o} fill="#f7b51d" /><path d="M8 9V3M14 11l6-5M14 15l7-1M14 18l7 3" stroke="#111" /><path d="M8 3h.1M20 6h.1M21 14h.1M21 21h.1" stroke="#111" strokeWidth="3" strokeLinecap="round" /></>,
  <><path d="M8 7l4-4h10v4l-4 4H8z" {...o} /><path d="M18 8l4-4v10l-4 4z" {...o} /><path d="M9 8h9v9h-4v-6H9z" fill="#999" /><rect x="3" y="11" width="10" height="10" {...o} fill="#f9c21e" stroke="#c21808" /></>,
  SEP,
  <><path d="M3 8l9-4 9 4v9l-9 5-9-5z" fill="#ccc" stroke="#444" /><path d="M12 11l9-3v9l-9 5z" fill="#999" stroke="#444" /><path d="M3 8l9-4 9 4-9 3z" fill="#eee" stroke="#555" strokeWidth="1" /><path d="M3 8l9 3 9-3M12 11v11" stroke="#e2400e" strokeWidth="2.200" /></>,
  <><path d="M3 14C1 9 3 8 4 4l3 3 2-5 4 4 4-3v5l4-2c0 5 2 7-1 12l-8 5z" fill="#f9b11d" stroke="#c21808" strokeWidth="1.300" /><path d="M6 12l7-6 6 5-2 8-5 3-5-3z" fill="#888" stroke="#222" /><path d="M9 13l4-3" stroke="#fff" strokeWidth="2" /></>,
  SEP, moment("2"), moment("3"), SEP,
  <><path d="M8 13l8-6 6 6-2 6-8 3z" {...o} /><path d="M4 5l8 8" stroke="#222" />{W(4, 4)}{W(9, 9)}</>,
  <><path d="M2 13l10-3v9L2 15zM13 9l7-3v16l-7-3z" {...o} /><path d="M16 4v15" stroke="#222" />{W(16, 4)}{W(16, 19)}<path d="M16 14l-3-3h6z" fill="#111" /></>,
  SEP,
  <><path d="M2 7v11q7 4 13 0V7" fill="#bbb" stroke="#444" /><ellipse cx="8.500" cy="7" rx="6.500" ry="2.500" fill="#ddd" stroke="#444" /><path d="M6 11l4 4M10 11l-4 4" stroke="#189018" strokeWidth="1.800" /><path d="M18 10l4 4M22 10l-4 4" stroke="#b11" strokeWidth="1.800" /></>,
  <><path d="M9 6q4-4 7-1t5 2q2 4 0 7t-1 6q-5 2-8 0z" fill="#ddd" stroke="#555" /><path d="M8 6q-6 1-5 5t0 6 5 4z" fill="#ccc" stroke="#555" /><path d="M8 6l6-3v13l-6 6z" {...o} /></>,
  SEP,
  <><path d="M4 18c0-6 4-8 8-8s8 2 8 8q-8 5-16 0z" {...o} /><path d="M12 13l4-9" stroke="#111" strokeWidth="1.500" /><path d="M15 2l4 1-3 4z" fill="#111" />{W(12, 13, 1.3)}</>,
  <><path d="M2 12l19 0v9l-5 1-14-4z" fill="#8fb0f5" stroke="#334" strokeWidth=".8" /><path d="M2 12l10-7 9 7-5 3z" fill="#e0134a" stroke="#80102a" strokeWidth=".6" /><path d="M9 13.500l7 2 4-3v4l-5 1z" fill="#b06fd0" /></>,
];
const FREEFORM: Tool[] = [
  <><path d="M4 4l13 5 4 11-17-5z" {...o} />{W(4, 4)}{W(17, 9)}{W(4, 15)}{W(20, 20)}</>,
  <><path d="M4 4h16v16H4z" {...o} /><path d="M4 12h16M12 4v16" stroke={D} />{[4, 12, 20].map((x) => [4, 12, 20].map((y) => W(x, y, 1.5)))}</>,
  SEP,
  <><path d="M5 3q8 2 9 10l7 0q-3 8-16 8z" {...o} />{W(5, 4)}{W(14, 13)}{W(21, 13)}{W(5, 20)}</>,
  <><path d="M4 5h16v15H4z" fill={O} />{wave(4)}{wave(12)}{wave(20)}</>,
  <><rect x="5" y="5" width="14" height="14" {...o} /><path d="M2 6v4M2 14v4M22 6v4M22 14v4M6 2h4M14 2h4M6 22h4M14 22h4" stroke="#111" strokeWidth="2.200" />{W(12, 2, 1.3)}{W(12, 22, 1.3)}{W(2, 12, 1.3)}{W(22, 12, 1.3)}</>,
  <><path d="M4 9q3 3 0 6t0 6M10 9q3 3 0 6t0 6M16 9q3 3 0 6t0 6M4 9h12M4 21h12" stroke="#444" /><path d="M11 6l6-4h5v4l-7 3z" fill="#999" stroke="#222" strokeWidth=".8" /></>,
  SEP,
  <><path d="M4 15L16 4l5 4L9 20z" {...o} /><path d="M3 22l4-4M18 6l4-4" stroke="#111" strokeWidth="1.500" /></>,
  <><path d="M3 21C3 12 6 9 12 7h9l0 6c-5-1-9 2-9 8z" {...o} /><path d="M12 3l9 3-4 7-3-4c-3 0-5 2-7 5 0-4 2-6 6-8z" fill="#111" /></>,
];
const PRIMITIVE: Tool[] = [
  <><rect x="6" y="2" width="15" height="20" {...o} /><rect x="2" y="11" width="9" height="9" fill="#ddd" stroke="#333" /><path d="M6 11v5h5" stroke="#333" /></>,
  SEP,
  <><path d="M4 8l8-5 8 4v9l-7 6-9-4z" {...o} fill="#f7b51d" />{W(9, 11, 2.2)}{W(14, 8, 1.8)}{W(17, 14, 2)}{W(10, 17, 2)}{W(8, 6.5, 1.2)}</>,
  <><path d="M2 9l9-6 9 5v5l-9 4-9-4z" {...o} fill="#f7b51d" /><path d="M2 9l9 4 9-5" stroke={D} /><rect x="12" y="13" width="8" height="9" fill="#fff" stroke="#333" /><path d="M12 16h8M12 19h8M15 13v9M18 13v9" stroke="#555" strokeWidth=".8" /></>,
  SEP,
  <><path d="M5 6v12q7 4 14 0V6" {...o} /><ellipse cx="12" cy="6" rx="7" ry="2.800" fill="#fbc04e" stroke={D} /></>,
  <><circle cx="12" cy="12" r="8.300" {...o} /><path d="M4 13q8 3 16 0" stroke={D} strokeWidth=".9" /><circle cx="10" cy="8" r="2.500" fill="#ffd27a" /></>,
];
const UTIL: Tool[] = [
  <><path d="M7 4h14l-4 17H3z" {...o} />{W(7, 4, 1.3)}{W(14, 4, 1.3)}{W(21, 4, 1.3)}{W(5, 12, 1.3)}{W(12, 12, 1.3)}{W(19, 12, 1.3)}{W(3, 20, 1.3)}{W(10, 20, 1.3)}{W(17, 20, 1.3)}</>,
  <><path d="M7 4h14l-4 17H3z" {...o} />{[[7, 4], [19, 4], [5, 12], [16, 12], [3, 20], [14, 20]].map(([x, y]) => <rect key={`${x}${y}`} x={x - 1.5} y={y - 2} width="4" height="4" fill="#fff" stroke="#111" />)}</>,
  SEP,
  <><path d="M6 5h10v14H6z" {...o} /><path d="M0 12h9M6 9l4 3-4 3" stroke="#111" strokeWidth="1.500" /></>,
];
function Group({ name, tools, w, plus = true }: { name: string; tools: Tool[]; w: string; plus?: boolean }) {
  return (
    <div className={`${w} flex h-[46px] shrink-0 flex-col overflow-hidden rounded-[4px] border border-[#777] bg-linear-to-b from-[#e2e2e2] to-[#cfcfcf]`}>
      <div className="flex h-[30px] shrink-0 items-center">
        {tools.map((t, i) => t === SEP
          ? <div key={i} className="flex w-[10px] shrink-0 justify-center"><span className="h-[22px] w-px bg-[#bbb]" /></div>
          : <div key={i} className="flex w-[28.200px] shrink-0 justify-center"><Svg w={24} h={24} cls="size-[22px]">{t}</Svg></div>)}
      </div>
      <div className="relative flex flex-1 items-center justify-center bg-linear-to-b from-[#2d2d2d] to-[#141414] pr-[12px] pb-[2px] text-[9.500px] leading-[12px] font-bold text-[#eee]">
        {name}
        {plus && <span className="absolute right-[2px] bottom-0 text-[11px] leading-[13px] text-[#999]">+</span>}
      </div>
    </div>
  );
}
const Btn = ({ children, dim }: { children: React.ReactNode; dim?: boolean }) => (
  <div className={`flex h-[21px] w-[34px] shrink-0 items-center justify-center rounded-[4px] border border-[#c6c6c6] ${dim ? "bg-[#e6e6e6]" : "bg-white"}`}><Svg w={16} h={16} cls="size-[15px]">{children}</Svg></div>
);

/* ---------- Grasshopper canvas ---------- */
/* node positions are screen coordinates; the canvas origin sits at (991, 305) */
type SliderT = { x: number; y: number; v: string; knob: number; left?: boolean };
const SLIDERS: SliderT[] = [
  { x: 1266, y: 334, v: "16.500", knob: 1370 }, { x: 1628, y: 354, v: "4.000", knob: 1749, left: true },
  { x: 1086, y: 443, v: "7.130", knob: 1171 }, { x: 1026, y: 488, v: "3.220", knob: 1103 },
  { x: 1231, y: 560, v: "14.500", knob: 1331 }, { x: 1277, y: 603, v: "41.000", knob: 1430, left: true },
  { x: 1029, y: 688, v: "3.220", knob: 1106 }, { x: 1090, y: 736, v: "7.130", knob: 1175 },
  { x: 1238, y: 804, v: "56.000", knob: 1365, left: true }, { x: 1284, y: 847, v: "0.000", knob: 1355 },
  { x: 1012, y: 918, v: "3.220", knob: 1090 }, { x: 1055, y: 960, v: "7.130", knob: 1140 },
  { x: 1262, y: 1080, v: "16.500", knob: 1366 }, { x: 1624, y: 1100, v: "4.000", knob: 1745, left: true },
];
const WIRES = [
  [1450, 344, 1531, 292], [1812, 364, 1868, 245], [1270, 453, 1395, 473], [1209, 498, 1395, 493], [1505, 463, 1647, 438],
  [1415, 570, 1540, 541], [1461, 613, 1540, 561], [1662, 546, 1647, 458],
  [1213, 698, 1402, 717], [1274, 746, 1402, 737], [1512, 707, 1654, 682], [1422, 814, 1548, 785], [1468, 857, 1548, 805], [1669, 790, 1654, 702],
  [1196, 928, 1285, 1008], [1362, 1018, 1526, 1018], [1446, 1090, 1526, 1038], [1646, 1023, 1632, 935], [1754, 915, 1863, 951], [1808, 1110, 1863, 991],
];
type Port = [string, number];
type NodeT = { x: number; y: number; w: string; h: string; pw: number; dark?: boolean; ins: Port[]; outs: Port[]; inAt: string; outAt: string; icon: React.ReactNode; iconAt: string };
const rectIcon = <Svg w={20} h={20}><rect x="1" y="1" width="18" height="18" rx="3" fill="#e8e8e8" stroke="#000" strokeWidth="2" /><rect x="5" y="5" width="10" height="10" fill="#fba626" stroke="#c00d0d" strokeWidth="1.500" /><path d="M10 5v5h5" stroke="#c00d0d" strokeWidth="1.500" /></Svg>;
const moveIcon = <Svg w={20} h={20}><path d="M4 14l5-5.500-2-1.500 8-2-1 8-2-2-5 5.500z" fill="#fba626" stroke="#5a3000" strokeWidth="1.100" /><circle cx="2.500" cy="17" r="1.900" fill="#fff" stroke="#111" /><circle cx="17" cy="2.500" r="1.900" fill="#fff" stroke="#111" /></Svg>;
const vecIcon = <Svg w={20} h={22}><text x="0" y="7" fontSize="8" fontFamily="Liberation Sans" fill="#111" letterSpacing="1">XYZ</text><path d="M3 9l3 5M10 9v5M17 9l-3 5" stroke="#555" /><path d="M4 18h10" stroke="#000" strokeWidth="2.400" /><path d="M12 14.500l5 3.500-5 3.500z" fill="#000" /><circle cx="3.500" cy="18" r="1.700" fill="#fff" stroke="#111" /></Svg>;
const mulIcon = <Svg w={18} h={18}><rect x=".8" y=".8" width="16.500" height="16.500" rx="2" fill="#f4f4f4" stroke="#555" /><path d="M5.500 5.500l7 7M12.500 5.500l-7 7" stroke="#000" strokeWidth="2.500" /></Svg>;
const rectNode = (x: number, y: number): NodeT => ({ x, y, w: "w-[106px]", h: "h-[85px]", pw: 106, ins: [["Plane", 12], ["X Size", 32], ["Y Size", 52], ["Radius", 72]], outs: [["Rectangle", 22], ["Length", 62]], inAt: "w-[30px]", outAt: "left-[60px]", icon: rectIcon, iconAt: "top-[31px] left-[34px]" });
const moveNode = (x: number, y: number): NodeT => ({ x, y, w: "w-[117px]", h: "h-[45px]", pw: 117, ins: [["Geometry", 12], ["Motion", 32]], outs: [["Geometry", 12], ["Transform", 32]], inAt: "w-[41px]", outAt: "left-[71px]", icon: moveIcon, iconAt: "top-[12px] left-[45px]" });
const vecNode = (x: number, y: number): NodeT => ({ x, y, w: "w-[117px]", h: "h-[65px]", pw: 117, dark: true, ins: [["X component", 12], ["Y component", 32], ["Z component", 52]], outs: [["Vector", 17], ["Length", 47]], inAt: "w-[52px]", outAt: "left-[83px]", icon: vecIcon, iconAt: "top-[20px] left-[58px]" });
const NODES: NodeT[] = [
  vecNode(1532, 260), moveNode(1649, 426), rectNode(1397, 441), vecNode(1543, 529),
  moveNode(1656, 670), rectNode(1404, 685), vecNode(1550, 773), moveNode(1634, 903), vecNode(1528, 1006),
  { x: 1287, y: 996, w: "w-[73px]", h: "h-[45px]", pw: 73, ins: [["A", 12], ["B", 32]], outs: [["Result", 22]], inAt: "w-[11px]", outAt: "left-[41px]", icon: mulIcon, iconAt: "top-[13px] left-[16px]" },
  { x: 1866, y: 939, w: "w-[106px]", h: "h-[85px]", pw: 106, ins: [["Geometry", 12], ["Plane", 32], ["Count", 52], ["Angle", 72]], outs: [], inAt: "w-[41px]", outAt: "left-[70px]", icon: <Svg w={20} h={40}><path d="M3 4v16M3 20l8 6M1 21h6" stroke="#222" strokeDasharray="2 2" /><circle cx="3" cy="3" r="2" fill="#fff" stroke="#111" /></Svg>, iconAt: "top-[30px] left-[45px]" },
];

function SliderNode({ x, y, v, knob, left }: SliderT) {
  const k = knob - x + 0.5;
  return (
    <div className="absolute flex h-[21px] w-[182px] overflow-hidden rounded-[3px] border border-[#333] bg-linear-to-b from-[#fafafa] to-[#cbcbcb] shadow-[0_0_0_1px_rgba(255,255,255,0.35)]" style={{ left: x - 991, top: y - 305 }}>
      <div className="flex w-[61px] shrink-0 items-center justify-center border-r border-[#333] bg-linear-to-b from-[#cdccd6] via-[#a09eae] to-[#8f8d9e] pt-[2px] text-[8.200px] leading-[10px] text-black">Number Slider</div>
      <svg width="120" height="19" className="shrink-0">
        <path d="M9 11.500h102" stroke="#aaa" />
        {Array.from({ length: 11 }, (_, i) => <path key={i} d={`M${9.5 + i * 10.1} ${i % 10 === 0 ? 6 : 8}v${i % 10 === 0 ? 6 : 4}`} stroke="#b0b0b0" />)}
        <circle cx={k - 62} cy="10" r="3" fill="#fff" stroke="#000" strokeWidth="2" />
        <text x={left ? k - 68.5 : k - 56.5} y="13.700" textAnchor={left ? "end" : "start"} fontSize="11.300" fill="#111" stroke="#111" strokeWidth=".2" fontFamily="Liberation Sans">{v}</text>
      </svg>
    </div>
  );
}
function CompNode(n: NodeT) {
  return (
    <div className={`absolute ${n.w} ${n.h} rounded-[3px] border border-[#333] text-[8px] leading-[10px] text-black shadow-[0_0_0_1px_rgba(255,255,255,0.35)] ${n.dark ? "bg-linear-to-b from-[#dcdbe2] from-[10%] via-[#a3a1b1] via-[20%] to-[#8b899a]" : "bg-linear-to-b from-[#fcfcfc] to-[#c9c9c9]"}`} style={{ left: n.x - 991, top: n.y - 305 }}>
      {n.ins.map(([t, y]) => <div key={t} className={`absolute left-0 text-right ${n.inAt} ${n.dark ? "ml-[2px]" : "ml-[-1px]"}`} style={{ top: y - 5 }}>{t}</div>)}
      {n.outs.map(([t, y]) => <div key={t} className={`absolute ${n.outAt} -ml-px`} style={{ top: y - 5 }}>{t}</div>)}
      <div className={`absolute ${n.iconAt}`}>{n.icon}</div>
    </div>
  );
}
const grip = (x: number, y: number, out: boolean) => (
  <path key={`${x}-${y}`} d={out ? `M${x} ${y - 4.5}a3.500 4.500 0 0 1 0 9` : `M${x} ${y - 4.5}a3.500 4.500 0 0 0 0 9`} fill="#fff" stroke="#111" strokeWidth="1.800" />
);
function Canvas() {
  return (
    <div className="relative min-h-0 flex-1 overflow-hidden bg-[#dcd9d2]">
      <svg width="925" height="820" viewBox="991 305 925 820" fill="none" className="block">
        {[1095.5, 1245.5, 1395.5, 1545.5, 1695.5, 1845.5].map((x) => <path key={x} d={`M${x} 305V1125`} stroke="#c5c2bc" />)}
        {Array.from({ length: 17 }, (_, i) => <path key={i} d={`M991 ${324.5 + i * 50}H1916`} stroke="#c1beb8" />)}
        {WIRES.map(([a, b, c, d], i) => {
          const k = Math.max((c - a) / 2, Math.abs(d - b) * 0.6);
          return <path key={i} d={`M${a} ${b + 0.5}C${a + k} ${b + 0.5} ${c - k} ${d + 0.5} ${c} ${d + 0.5}`} stroke="#5a5856" strokeWidth="3" />;
        })}
        {SLIDERS.map((q) => grip(q.x + 182, q.y + 10.5, true))}
        {NODES.map((n) => <g key={`${n.x}${n.y}`}>{n.ins.map((p) => grip(n.x, n.y + p[1] + 0.5, false))}{n.outs.map((p) => grip(n.x + n.pw, n.y + p[1] + 0.5, true))}</g>)}
        <g>
          <path d="M1903 1082l5 3 3 6-4 2-4-5z" fill="#111" />
          <circle cx="1924" cy="1112" r="24" fill="#ececec" stroke="#111" strokeWidth="3" />
          <circle cx="1924" cy="1112" r="18" fill="#ddd" stroke="#999" />
          <path d="M1908 1098l4 4M1904 1113h5" stroke="#333" strokeWidth="1.500" />
        </g>
      </svg>
      {SLIDERS.map((q) => <SliderNode key={`${q.x}-${q.y}`} {...q} />)}
      {NODES.map((n) => <CompNode key={`${n.x}-${n.y}`} {...n} />)}
    </div>
  );
}

/* ---------- Grasshopper window ---------- */
function Grasshopper() {
  return (
    <div className="absolute top-[170px] left-[990px] flex h-[955px] w-[926px] flex-col overflow-hidden rounded-tl-[5px] border-l border-[#b5b5b5] bg-[#ececec] font-['Liberation_Sans',sans-serif] whitespace-nowrap shadow-[0_0_26px_rgba(0,0,0,0.4)]">
      <div className="flex h-[22px] shrink-0 items-center border-b border-[#d2d2d2] bg-[#f6f6f6] pl-[7px]">
        <span className="size-[12px] rounded-full border border-[#cfcfcf] bg-[#dcdcdc]" /><span className="ml-[8px] size-[12px] rounded-full border border-[#cfcfcf] bg-[#dcdcdc]" /><span className="ml-[8px] size-[12px] rounded-full border border-[#cfcfcf] bg-[#dcdcdc]" />
        <span className="ml-[363px] pt-[2px] font-['Inter',sans-serif] text-[13px] tracking-[-0.08px] text-[#ababab]">Grasshopper - presskit</span>
      </div>
      <div className="flex h-[22px] shrink-0 items-center pt-[3px] pl-[5px] text-[11.500px] text-[#85857a]">
        <span className="w-[52px]">Params</span><span className="w-[44px]">Maths</span><span className="w-[36px]">Sets</span><span className="w-[45px]">Vector</span><span className="w-[36px]">Curve</span>
        <span className="mr-[7px] flex h-[21px] w-[52px] shrink-0 items-center justify-center self-end rounded-t-[5px] border border-b-0 border-[#8e8e8e] bg-[#fafafa] pb-[2px] text-black">Surface</span>
        <span className="w-[41px]">Mesh</span><span className="w-[57px]">Intersect</span><span className="w-[64px]">Transform</span><span>Display</span>
      </div>
      <div className="flex h-[60px] shrink-0 gap-[3px] border-t border-[#8e8e8e] border-b border-b-[#c4c4c4] bg-linear-to-b from-[#dcdcdc] to-[#efefef] pt-[2px] pl-[2px]">
        <Group name="Analysis" tools={ANALYSIS} w="w-[419px]" />
        <Group name="Freeform" tools={FREEFORM} w="w-[249px]" />
        <Group name="Primitive" tools={PRIMITIVE} w="w-[165px]" />
        <Group name="Util" tools={UTIL} w="w-[130px]" plus={false} />
      </div>
      <div className="flex h-[31px] shrink-0 items-center gap-[4px] pb-px pl-[2px]">
        <Btn><path d="M3 7l2-6h7l2 3v5z" fill="#e5e5e5" stroke="#888" strokeWidth=".8" /><path d="M1 15l1-8 5-1 1-2h6l0 11z" fill="#5fc83c" stroke="#3c8f22" strokeWidth=".8" /></Btn>
        <Btn><rect x="1" y="1" width="14" height="14" rx="1" fill="#2f5fd0" stroke="#1c3a90" /><rect x="4" y="1.500" width="8" height="5" fill="#dfe8ff" /><rect x="4" y="9" width="8" height="6" fill="#c9d0dc" /><path d="M9 10h2v4H9z" fill="#223" /></Btn>
        <span className="h-[16px] w-px shrink-0 bg-[#ccc]" />
        <div className="-ml-[2px] flex h-[21px] w-[67px] shrink-0 rounded-r-[4px] border border-[#c0c0c0] bg-white text-[9.500px] leading-[12px] text-black">
          <span className="w-[50px] shrink-0 border-r border-[#ddd] pt-[2px] pl-[3px]">100%</span>
          <span className="flex flex-1 items-center justify-center"><Svg w={8} h={6}><path d="M1 1l3 3 3-3" stroke="#555" strokeWidth="1.400" /></Svg></span>
        </div>
        <div className="ml-px flex shrink-0 gap-[4px]">
          <Btn><path d="M2 5V2h3M11 2h3v3M14 11v3h-3M5 14H2v-3" stroke="#111" strokeWidth="2.400" /><path d="M5 5l6 6M11 5l-6 6" stroke="#111" strokeWidth="1.500" strokeDasharray="2 1" /></Btn>
          <Btn><path d="M1 8q7-7 14 0-7 7-14 0z" fill="#fff" stroke="#234" /><circle cx="8" cy="8" r="3.500" fill="#49a5cc" stroke="#123" /><circle cx="8" cy="8" r="1.500" fill="#000" /></Btn>
          <Btn><path d="M1 10q3-4 3 0t5-1" stroke="#333" strokeWidth="1.400" /><path d="M7 13l-1-4 6-7 2-1 1 4-4 7z" fill="#d8262b" /><path d="M12 2l2 4" stroke="#f7a0a0" strokeWidth="2" /></Btn>
        </div>
        <div className="flex min-w-0 flex-1 justify-end">
          <div className="flex shrink-0 gap-[4px]">
            <Btn><path d="M4 3q4-3 8 0v8q-4 4-8 0z" fill="#ddd" stroke="#888" /><ellipse cx="8" cy="11" rx="5.500" ry="3.500" fill="#333" /></Btn>
            <Btn><path d="M2 8l6-6q4-1 6 3v4l-6 6q-4 0-6-3z" fill="#e4e4e4" stroke="#777" /><path d="M5 11l6-6M8 14l6-6" stroke="#777" /></Btn>
            <Btn dim><path d="M1 9l6-7q5-1 8 3v5l-6 5q-5 1-8-2z" fill="#c01020" stroke="#5c0810" /><path d="M5 6l4-3" stroke="#ff8a90" strokeWidth="1.800" /></Btn>
          </div>
        </div>
        <div className="flex w-[63px] shrink-0 items-center gap-[4px]">
          <span className="h-[16px] w-px shrink-0 bg-[#ccc]" />
          <Btn><path d="M1 8l6-6q5-1 8 3l-1 7-5 2q-5 1-7-2z" fill="#ccc" stroke="#777" /><path d="M6 3l4-2q4 1 5 4l-1 6z" fill="#4cae2a" stroke="#246" strokeWidth=".6" /></Btn>
          <Btn><circle cx="8" cy="8" r="6.500" fill="#f2f2f2" stroke="#777" /><path d="M8 1.500a6.500 6.500 0 0 0 0 13z" fill="#f08a24" /></Btn>
        </div>
      </div>
      <Canvas />
    </div>
  );
}

export default function App() {
  return (
    <div className="relative h-[1125px] w-[1916px] overflow-hidden bg-[#e4e4e4] font-['Inter',sans-serif]">
      <SharedDefs />
      <Illustrator />
      <div className="absolute top-[60px] left-[-20px] h-[982px] w-[1090px] rounded-[5px] shadow-[0_22px_50px_6px_rgba(0,0,0,0.55)]" />
      <Rhino />
      <Grasshopper />
      <MenuBar />
    </div>
  );
}
